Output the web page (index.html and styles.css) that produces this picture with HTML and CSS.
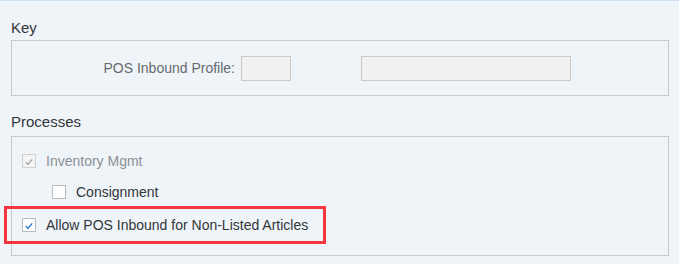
FILE: index.html
```html
<!DOCTYPE html>
<html lang="en">
  <head>
    <meta charset="UTF-8" />
    <title>POS Inbound Profile</title>
    <link rel="stylesheet" href="styles.css">
  </head>
  <body>
    <div class="page">
      <h2 class="group-title title-key">Key</h2>
      <div class="group group-key">
        <label class="field-label">POS Inbound Profile:</label>
        <div class="input input-short"></div>
        <div class="input input-long"></div>
      </div>

      <h2 class="group-title title-proc">Processes</h2>
      <div class="group group-proc">
        <div class="check-row row-first disabled">
          <span class="box checked">
            <svg viewBox="0 0 14 14" width="14" height="14"><path d="M3.3 7.3 L5.9 9.8 L10.7 4" /></svg>
          </span>
          <span class="check-text">Inventory Mgmt</span>
        </div>
        <div class="check-row row-sub">
          <span class="box"></span>
          <span class="check-text">Consignment</span>
        </div>
        <div class="highlight">
          <div class="check-row">
            <span class="box checked active">
              <svg viewBox="0 0 14 14" width="14" height="14"><path d="M3.3 7.3 L5.9 9.8 L10.7 4" /></svg>
            </span>
            <span class="check-text">Allow POS Inbound for Non-Listed Articles</span>
          </div>
        </div>
      </div>
    </div>
  </body>
</html>
```

FILE: styles.css
```css
body {
  margin: 0;
  background: #eff4f9;
  font-family: "Liberation Sans", Arial, sans-serif;
  font-size: 14px;
  color: #32363a;
  border-top: 1px solid #cfe0f1;
  height: 263px;
  overflow: hidden;
}

.page {
  padding: 0 10px 0 11px;
}

.group-title {
  margin: 0;
  font-size: 15px;
  font-weight: normal;
  line-height: 18px;
  color: #32363a;
}

.title-key {
  padding-top: 18px;
  height: 21px;
}

.title-proc {
  padding-top: 17px;
  height: 23px;
}

.group {
  border: 1px solid #c8c9cb;
}

/* Key */
.group-key {
  height: 54px;
  display: flex;
  align-items: center;
}

.field-label {
  width: 223px;
  padding-right: 6px;
  text-align: right;
  color: #666a6e;
}

.input {
  height: 23px;
  background: #f1f1f1;
  border: 1px solid #c9c9c9;
  margin-top: 1px;
}

.input-short {
  width: 48px;
}

.input-long {
  width: 208px;
  margin-left: 70px;
}

/* Processes */
.group-proc {
  padding: 8px 0 11px 10px;
}

.check-row {
  display: flex;
  align-items: center;
  height: 32px;
}

.row-sub {
  height: 29px;
  padding-left: 30px;
}

.box {
  box-sizing: border-box;
  width: 14px;
  height: 14px;
  border: 1px solid #b8bcc0;
  background: #ffffff;
  display: flex;
}

.box svg path {
  fill: none;
  stroke: #0a6ed1;
  stroke-width: 1.5;
}

.disabled .box {
  background: #f4f4f4;
  border-color: #cfd1d3;
}

.disabled .box svg path {
  stroke: #a0a4a8;
}

.disabled .check-text {
  color: #8b9096;
}

.check-text {
  margin-left: 10px;
}

.highlight {
  display: inline-block;
  margin-left: -18px;
  padding: 0 15px;
  border: 3px solid #f5363e;
}
```
